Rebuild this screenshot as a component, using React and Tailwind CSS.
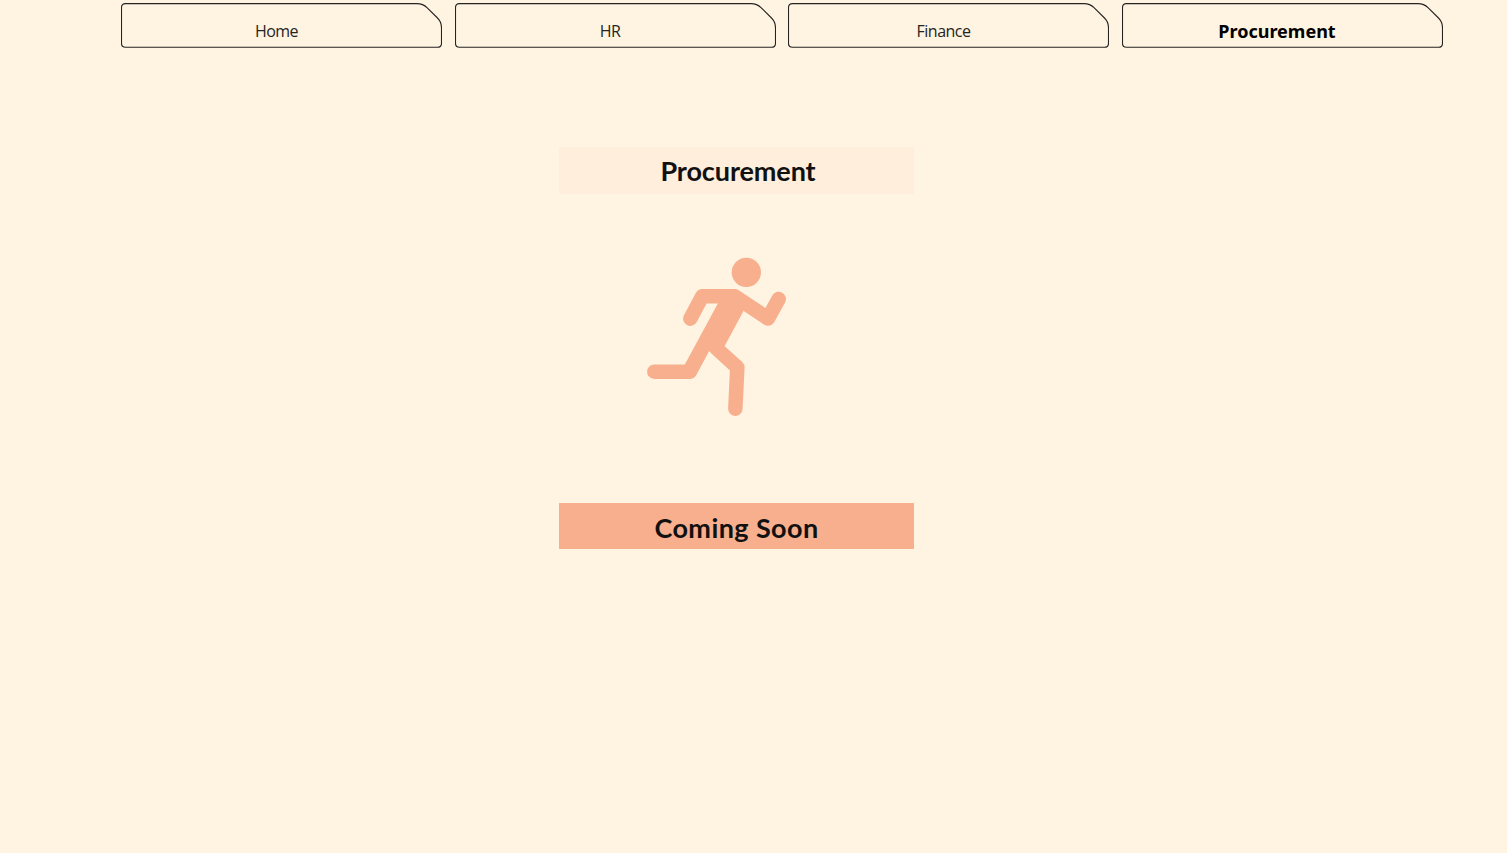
const tabs = [
  { label: 'Home', style: "pb-[2px] font-['Open_Sans'] text-[16px] font-normal text-[#252423] tracking-[-0.6px]" },
  { label: 'HR', style: "pb-[2px] font-['Open_Sans'] text-[16px] font-normal text-[#252423] tracking-[-0.5px]" },
  { label: 'Finance', style: "pb-[2px] font-['Open_Sans'] text-[16px] font-normal text-[#252423] tracking-[-0.5px]" },
  { label: 'Procurement', style: "font-['Noto_Sans'] text-[18px] font-bold text-black tracking-[0px]" },
];

function Tab({ label, style }) {
  return (
    <button className="relative flex h-[45px] w-[321px] shrink-0 items-center justify-center pt-[12px] pr-[10px]">
      <svg className="absolute inset-0 h-full w-full" viewBox="0 0 321 45" fill="none" stroke="#252423" strokeWidth="1.1" aria-hidden="true">
        <path d="M4.5 .6H296Q302 .6 306 4.6L316.5 15Q320.5 19 320.5 25V40.3Q320.5 44.3 316.5 44.3H4.5Q.5 44.3 .5 40.3V4.6Q.5 .6 4.5 .6Z" />
      </svg>
      <span className={`block ${style}`}>{label}</span>
    </button>
  );
}

function Runner() {
  return (
    <svg className="ml-[81px] h-[175px] w-[155px]" viewBox="0 0 465 525" fill="#f8af8e" aria-hidden="true">
      <circle cx="319" cy="67" r="44" />
      <path d="M234 160L284 132L310 184L254 288L205 305L168 376L149 365L135 343Z" />
      <g fill="none" stroke="#f8af8e" strokeWidth="43.5" strokeLinecap="round" strokeLinejoin="round">
        <path d="M151 206L187 138.500H284L384 205.500L416 147" />
        <path d="M43 365H149L187 295" />
        <path d="M228 294L292 352L286 476" />
      </g>
    </svg>
  );
}

export default function App() {
  return (
    <div className="min-h-screen overflow-hidden bg-[#fff3e1]">
      <nav className="flex gap-[12.5px] pt-[3px] pl-[121px]">
        {tabs.map((tab) => (
          <Tab key={tab.label} {...tab} />
        ))}
      </nav>
      <main className="ml-[559px] flex w-[355px] flex-col pt-[99px] font-['Lato'] text-[27px] leading-none font-bold text-[#111111]">
        <h1 className="flex h-[47px] items-center justify-center bg-[#ffeedb] pl-[3px] tracking-[-0.1px]">Procurement</h1>
        <div className="pt-[56px] pb-[78px]">
          <Runner />
        </div>
        <p className="flex h-[46px] items-center justify-center bg-[#f8af8e] pt-[3px] tracking-[0.4px]">Coming Soon</p>
      </main>
    </div>
  );
}
